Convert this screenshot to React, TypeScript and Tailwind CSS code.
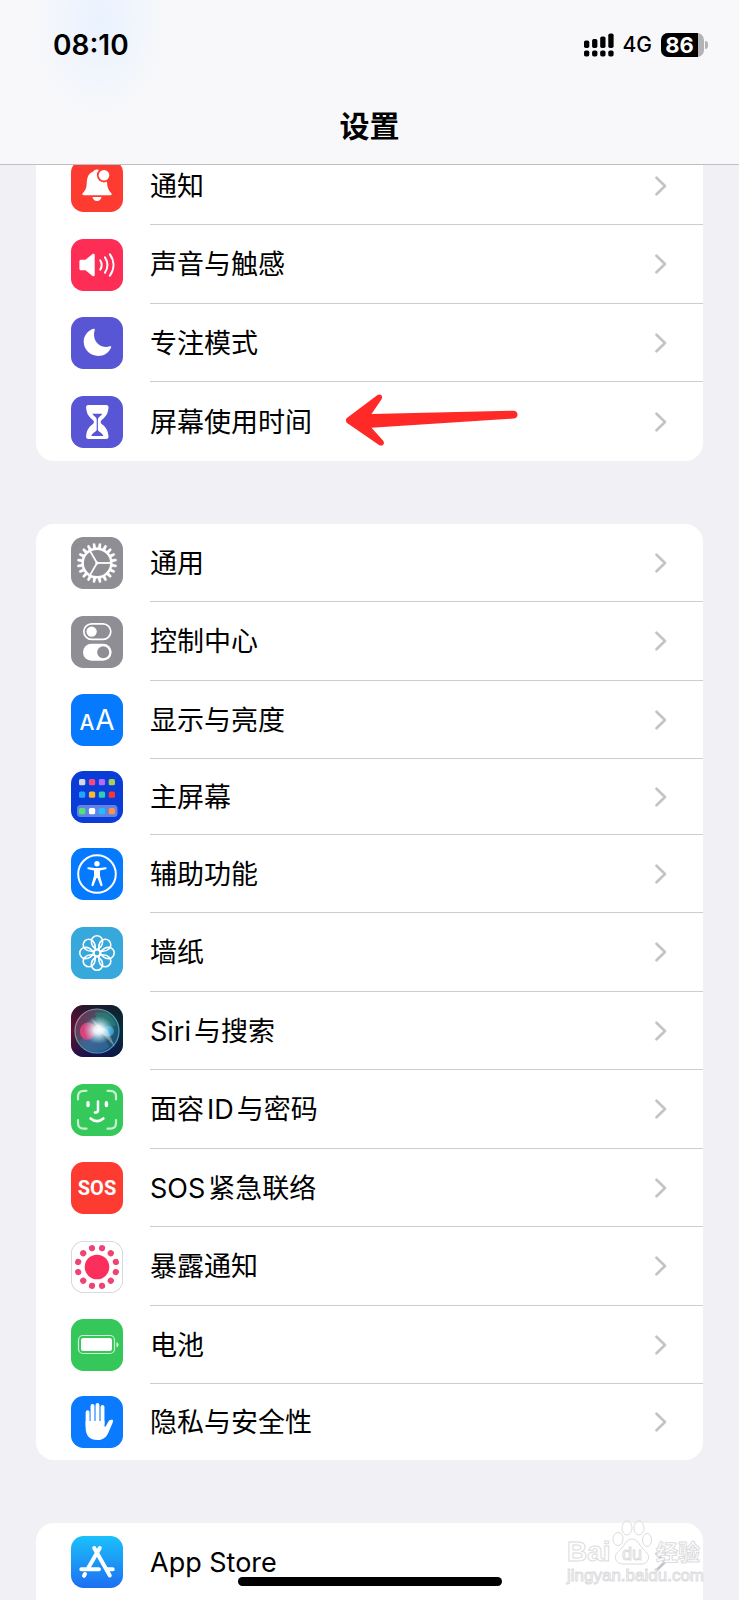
import type { ReactNode } from "react";

const ring = (count: number, offset = 0) =>
  Array.from({ length: count }, (_, i) => offset + (i * 360) / count);

function Tile({ bg, children }: { bg: string; children: ReactNode }) {
  return (
    <svg viewBox="0 0 52 52" aria-hidden="true" className="size-[52px] shrink-0">
      <rect width="52" height="52" rx="12.5" fill={bg} />
      {children}
    </svg>
  );
}

const BellIcon = () => (
  <Tile bg="#fe3b30">
    <path
      d="M12.6 35.2c-1.2 0-1.6-1.2-.8-2.1 2.4-2.7 3.6-4.4 3.9-9.4.3-6 1.5-10.2 6.2-11.9.8-1.5 2.2-2.4 4.1-2.4 1.8 0 3.200.8 4 2.2l3 3 3 7c.1 6.200 1.600 8.700 4.200 11.500.9 1 .4 2.100-.8 2.100z"
      fill="#fff"
    />
    <circle cx="33" cy="15.3" r="7.1" fill="#fe3b30" />
    <circle cx="33" cy="15.3" r="5.3" fill="#fff" />
    <path d="M21.500 37h9c-.5 2.600-2.200 4-4.500 4s-4-1.400-4.500-4z" fill="#fff" />
  </Tile>
);

const SpeakerIcon = () => (
  <Tile bg="#fd2d56">
    <path
      d="M9.900 20.800h4.600l7-5.700c1-.8 2.200-.4 2.200.9v20c0 1.300-1.200 1.700-2.200.9l-7-5.700H9.900c-.9 0-1.500-.6-1.500-1.500v-7.400c0-.9.6-1.500 1.500-1.500z"
      fill="#fff"
    />
    <g fill="none" stroke="#fff" strokeWidth="2" strokeLinecap="round">
      <path d="M29.300 21.400c1.700 2.800 1.700 6.400 0 9.200" />
      <path d="M34 18.400c3 4.700 3 10.500 0 15.200" />
      <path d="M38.900 15.400c4.700 6.600 4.700 14.600 0 21.200" />
    </g>
  </Tile>
);

const MoonIcon = () => (
  <Tile bg="#5856d5">
    <path
      d="M22.500 11.800c.8-.3 1.500.3 1.200 1.200C20.500 23 28.500 32.600 38.900 29.300c1-.3 1.600.3 1.200 1.200C37.900 35.700 33 39 27.300 39 19.100 39 12.700 32.600 12.700 24.600c0-5.800 4-10.900 9.800-12.800z"
      fill="#fff"
    />
  </Tile>
);

const HourglassIcon = () => (
  <Tile bg="#5856d5">
    <path
      d="M17.300 9h18c1.500 0 2.400 1 2.200 2.500-.5 5.800-2 8.600-6.500 12.200-1.800 1.500-1.800 3.200 0 4.600 4.500 3.600 6 6.400 6.500 12.200.2 1.500-.7 2.500-2.200 2.500h-18c-1.500 0-2.400-1-2.200-2.500.5-5.800 2-8.600 6.500-12.200 1.800-1.400 1.800-3.100 0-4.600-4.500-3.600-6-6.400-6.500-12.200C14.900 10 15.800 9 17.300 9z"
      fill="#fff"
    />
    <path
      d="M21.400 17.800h9.800c-.6 1.400-2.300 2.500-3.300 3.500-1 1-1 2-1 4v8.500c.1 1.900 4.300 2.700 5.400 6.200h-12c1.100-3.500 5.300-4.300 5.400-6.200v-8.500c0-2 0-3-1-4-1-1-2.700-2.100-3.300-3.500z"
      fill="#5856d5"
    />
  </Tile>
);

const GearIcon = () => (
  <Tile bg="#8f8e94">
    <g transform="translate(26 26)" fill="none" stroke="#fff">
      <circle r="14.300" strokeWidth="2.400" />
      {ring(20, 9).map((a) => (
        <path key={a} d="M-1.500-15L-1-19.700H1L1.500-15z" fill="#fff" strokeWidth=".3" transform={`rotate(${a})`} />
      ))}
      {ring(3).map((a) => (
        <path key={a} d="M0 0H14" strokeWidth="1.800" transform={`rotate(${a})`} />
      ))}
      <circle r="1.600" fill="#fff" stroke="none" />
    </g>
  </Tile>
);

const SwitchesIcon = () => (
  <Tile bg="#8f8e94">
    <rect x="12.800" y="7.800" width="27" height="15.600" rx="7.800" fill="none" stroke="#fff" strokeWidth="1.700" />
    <circle cx="20.600" cy="15.600" r="5.200" fill="#fff" />
    <rect x="12" y="27.800" width="28.600" height="17" rx="8.500" fill="#fff" />
    <circle cx="32.200" cy="36.300" r="6" fill="#8f8e94" />
  </Tile>
);

const DisplayIcon = () => (
  <Tile bg="#067aff">
    <g fill="#fff" fontFamily="Inter, sans-serif" textAnchor="middle">
      <text x="16" y="36" fontSize="21" fontWeight="500">A</text>
      <text x="34" y="36" fontSize="28">A</text>
    </g>
  </Tile>
);

const appColors = [
  ["#d3d8e6", "#f5487c", "#b36bf8", "#a5d14c"],
  ["#22a6fb", "#fdb72b", "#2dcfae", "#fb3536"],
  ["#52e36f", "#ffffff", "#23bdfb", "#fb9442"],
];
const appRows = [8, 20.5, 37];

const HomeScreenIcon = () => (
  <Tile bg="#0a3cd8">
    <rect x="6" y="34" width="40.500" height="12" rx="3.500" fill="#fff" fillOpacity=".36" />
    {appColors.map((row, r) =>
      row.map((c, i) => (
        <rect key={`${r}-${i}`} x={8 + i * 9.9} y={appRows[r]} width="6.300" height="6.300" rx="1.600" fill={c} />
      )),
    )}
  </Tile>
);

const AccessibilityIcon = () => (
  <Tile bg="#067aff">
    <circle cx="26" cy="26" r="18.800" fill="none" stroke="#fff" strokeWidth="2" />
    <circle cx="26" cy="15.800" r="2.700" fill="#fff" />
    <path
      d="M17.500 19.200l6 .8h5l6-.8c1.400-.1 1.600 1.700.3 2l-5.800 1.300v5.200l2.500 9c.4 1.500-1.500 2-2.100.7L26.500 30h-1l-2.900 7.400c-.6 1.300-2.500.8-2.100-.7l2.500-9v-5.200l-5.800-1.300c-1.300-.3-1.100-2.100.3-2z"
      fill="#fff"
    />
  </Tile>
);

const WallpaperIcon = () => (
  <Tile bg="#36a8dc">
    <g transform="translate(26 26)" fill="none" stroke="#fff" strokeWidth="1.600">
      {ring(8).map((a) => (
        <path
          key={a}
          d="M0-3.200C-3-5-5.600-8-5.600-11.600a5.600 5.600 0 0 1 11.200 0C5.600-8 3-5 0-3.200z"
          transform={`rotate(${a})`}
        />
      ))}
      <circle r="3.200" />
    </g>
  </Tile>
);

const SiriIcon = () => (
  <Tile bg="url(#siri-base)">
    <defs>
      <linearGradient id="siri-base" x1="0" y1="0" x2="1" y2="0">
        <stop offset="0" stopColor="#6a0c34" />
        <stop offset=".45" stopColor="#27203c" />
        <stop offset="1" stopColor="#062c33" />
      </linearGradient>
      <linearGradient id="siri-shade" x1="0" y1="0" x2="0" y2="1">
        <stop offset="0" stopColor="#10151f" stopOpacity=".5" />
        <stop offset=".5" stopColor="#101a40" stopOpacity="0" />
        <stop offset="1" stopColor="#0a0e55" stopOpacity=".7" />
      </linearGradient>
      <linearGradient id="siri-orb" x1="0" y1=".2" x2="1" y2=".8">
        <stop offset="0" stopColor="#8c3a63" />
        <stop offset=".5" stopColor="#4a7f8c" />
        <stop offset="1" stopColor="#16688c" />
      </linearGradient>
      <linearGradient id="siri-rim" x1="0" y1="0" x2="1" y2="1">
        <stop offset="0" stopColor="#e8709c" />
        <stop offset=".4" stopColor="#3fae9a" />
        <stop offset="1" stopColor="#4f8cf0" />
      </linearGradient>
      <radialGradient id="siri-glow">
        <stop offset="0" stopColor="#fff" />
        <stop offset=".3" stopColor="#f2fbff" stopOpacity=".9" />
        <stop offset="1" stopColor="#9fe6ee" stopOpacity="0" />
      </radialGradient>
    </defs>
    <rect width="52" height="52" rx="12.500" fill="url(#siri-shade)" />
    <circle cx="26" cy="26" r="22" fill="url(#siri-orb)" fillOpacity=".65" stroke="url(#siri-rim)" strokeWidth="1.200" />
    <path d="M24 8c9-3 18 3 21 12-5 3-12 4-17 6z" fill="#1c9a7c" fillOpacity=".45" />
    <path d="M8 36c5-4 12-7 19-10 4 5 9 10 11 16-9 8-24 6-30-6z" fill="#3f78c8" fillOpacity=".4" />
    <path d="M28 26c-4-6-9-10-14-8-6 3-7 12-1 16 6 3 10-3 15-8z" fill="#f0417f" fillOpacity=".85" />
    <path d="M26 26c5 3 8 6 13 5 5-1 5-7 2-9-5-3-9 1-15 4z" fill="#37a8ee" fillOpacity=".75" />
    <ellipse cx="27.500" cy="25" rx="15" ry="14" fill="url(#siri-glow)" />
    <path d="M28 25L20 13l10 9 6 2 8 18z" fill="#fff" fillOpacity=".35" />
  </Tile>
);

const FaceIcon = () => (
  <Tile bg="#35c85a">
    <g fill="none" stroke="#fff" strokeLinecap="round">
      <path
        d="M7 15.500V12.500Q7 6.800 12.700 6.800H15.500M36.500 6.800h2.800Q45 6.800 45 12.500v3M45 36v3Q45 44.700 39.300 44.700h-2.800M15.500 44.700h-2.800Q7 44.700 7 39V36"
        strokeWidth="2.200"
        strokeOpacity=".72"
      />
      <path d="M17 18.800v2.700M35.400 18.800v2.700" strokeWidth="3.400" />
      <path d="M27 17.500v8.700q0 2.200-2.200 2.200h-.9" strokeWidth="2.500" />
      <path d="M19.600 34.500q6.400 5.400 12.800 0" strokeWidth="2.600" />
    </g>
  </Tile>
);

const SosIcon = () => (
  <Tile bg="#fe3b30">
    <text
      x="26"
      y="33"
      textAnchor="middle"
      fill="#fff"
      fontSize="20"
      fontWeight="700"
      fontFamily="Roboto, sans-serif"
    >
      SOS
    </text>
  </Tile>
);

const ExposureIcon = () => (
  <Tile bg="#d0d0d2">
    <rect x=".8" y=".8" width="50.400" height="50.400" rx="11.800" fill="#fff" />
    <g transform="translate(26 26)">
      <circle r="12.300" fill="#fc2e5b" />
      {ring(12, 15).map((a) => (
        <circle key={a} cy="-19.500" r="3.100" fill="#ef4374" transform={`rotate(${a})`} />
      ))}
    </g>
  </Tile>
);

const BatteryIcon = () => (
  <Tile bg="#35c759">
    <rect x="7.500" y="16.500" width="36" height="18" rx="4.500" fill="none" stroke="#fff" strokeOpacity=".75" strokeWidth="1.200" />
    <rect x="10" y="19" width="31" height="13" rx="2.200" fill="#fff" />
    <path d="M45.500 23v5.500c1.200-.5 2-1.500 2-2.750s-.8-2.250-2-2.750z" fill="#fff" fillOpacity=".8" />
  </Tile>
);

const HandIcon = () => (
  <Tile bg="#0a7aff">
    <g stroke="#fff" strokeWidth="3.900" strokeLinecap="round">
      <path d="M16.600 16.300V30M21.500 10V28M26.500 9V28M31.500 11V28" />
    </g>
    <path
      d="M14.650 25h18.800v4.800c0 1 1 1.200 1.500.3l2.300-4.300c.8-1.600 2.200-2.500 3.900-2 1 .3 1.200 1.200.8 2.100l-4.500 10.500c-2.200 5.200-5.900 7.600-11.100 7.600-7.400 0-11.700-4.300-11.700-12z"
      fill="#fff"
    />
  </Tile>
);

const AppStoreIcon = () => (
  <Tile bg="url(#store)">
    <defs>
      <linearGradient id="store" x1="0" y1="0" x2="0" y2="1">
        <stop offset="0" stopColor="#1bc1fb" />
        <stop offset="1" stopColor="#1d6ff2" />
      </linearGradient>
    </defs>
    <g fill="none" stroke="#fff" strokeWidth="4" strokeLinecap="round">
      <path d="M28.800 12L17.500 31.500M14 38l-1 1.800M23.200 12L38.800 39.500M10.300 33.300H28M36.500 33.300h5.200" />
    </g>
    <path d="M28.500 28.500l6 10.500" stroke="#1e86f5" strokeWidth="1.200" />
  </Tile>
);

type Item = { label: string; icon: ReactNode; compact?: boolean; marked?: boolean };

const groups: Item[][] = [
  [
    { label: "通知", icon: <BellIcon /> },
    { label: "声音与触感", icon: <SpeakerIcon /> },
    { label: "专注模式", icon: <MoonIcon /> },
    { label: "屏幕使用时间", icon: <HourglassIcon />, marked: true },
  ],
  [
    { label: "通用", icon: <GearIcon /> },
    { label: "控制中心", icon: <SwitchesIcon /> },
    { label: "显示与亮度", icon: <DisplayIcon /> },
    { label: "主屏幕", icon: <HomeScreenIcon />, compact: true },
    { label: "辅助功能", icon: <AccessibilityIcon /> },
    { label: "墙纸", icon: <WallpaperIcon /> },
    { label: "Siri与搜索", icon: <SiriIcon /> },
    { label: "面容ID与密码", icon: <FaceIcon /> },
    { label: "SOS紧急联络", icon: <SosIcon /> },
    { label: "暴露通知", icon: <ExposureIcon /> },
    { label: "电池", icon: <BatteryIcon /> },
    { label: "隐私与安全性", icon: <HandIcon />, compact: true },
  ],
  [{ label: "App Store", icon: <AppStoreIcon /> }],
];

/** Sets Latin runs a little apart from the Chinese characters beside them. */
function Label({ text }: { text: string }) {
  return (
    <span className="pt-[2px] text-[27px] leading-9">
      {text.split(/([A-Za-z ]+)/).filter(Boolean).map((part, i) =>
        /[A-Za-z]/.test(part) ? (
          <span key={i} className="mx-[3px] first:ml-0 last:mr-0">{part}</span>
        ) : (
          <span key={i}>{part}</span>
        ),
      )}
    </span>
  );
}

function Arrow() {
  return (
    <svg viewBox="0 0 174 54" aria-hidden="true" className="absolute left-[309px] top-[11px] h-[54px] w-[174px]">
      <path
        d="M2.500 24.600L32.200 2.200c3.200-2.200 6.400 1 4.200 4.200L26.500 21 168.500 17.700c5.400 0 5.400 7.600 0 7.900L26.500 34.700 38 47.500c2.600 3.300-.6 6.200-4 4.400L2.800 30.600c-2.400-1.700-2.400-4.400-.3-6z"
        fill="#ff2a27"
      />
    </svg>
  );
}

function Row({ item }: { item: Item }) {
  return (
    <li className={`group relative ${item.compact ? "h-[76px]" : "h-[78px] even:h-[79px]"}`}>
      <a href="#" className="flex h-full items-center gap-[27px] pl-[35px]">
        {item.icon}
        <span className="flex h-full flex-1 items-center justify-between border-b border-[#cdcdd0] pr-9 group-last:border-b-0">
          <Label text={item.label} />
          <svg viewBox="0 0 14 22" aria-hidden="true" className="h-[22px] w-[14px]">
            <path d="M3.500 2.800L12 11l-8.500 8.200" fill="none" stroke="#c4c4c7" strokeWidth="2.700" strokeLinecap="round" strokeLinejoin="round" />
          </svg>
        </span>
      </a>
      {item.marked && <Arrow />}
    </li>
  );
}

function StatusBar() {
  return (
    <div className="flex h-[90px] items-center justify-between pl-[53px] pr-[31px]">
      <time className="text-[28px] font-semibold leading-9">08:10</time>
      <div className="flex items-center gap-[9px]">
        <svg viewBox="0 0 30 24" role="img" aria-label="信号" className="h-6 w-[30px]">
          {[0, 1, 2, 3].map((i) => (
            <g key={i}>
              <rect x={i * 8.1} y={[7.5, 6, 3.5, 0.5][i]} width="5.300" height={[7.5, 9, 11.5, 14.5][i]} rx="1.800" />
              <rect x={i * 8.1} y="17.500" width="5.300" height="6" rx="1.800" />
            </g>
          ))}
        </svg>
        <span className="text-[21px] font-medium leading-7">4G</span>
        <div className="flex items-center gap-px">
          <div className="flex h-6 w-[43px] items-center overflow-hidden rounded-[7px] bg-[#b3b3b5]">
            <span className="flex h-full w-[37px] items-center justify-center bg-black text-[22px] font-bold leading-6 text-white">
              86
            </span>
          </div>
          <span className="h-2 w-[3px] rounded-r-full bg-[#b3b3b5]" />
        </div>
      </div>
    </div>
  );
}

function Watermark() {
  return (
    <div
      aria-hidden="true"
      className="pointer-events-none absolute bottom-[14px] right-9 flex w-[136px] flex-col font-['Liberation_Sans','Noto_Sans_CJK_SC',sans-serif] text-white [-webkit-text-stroke:1px_#dcdcde]"
    >
      <div className="flex items-end">
        <span className="w-[45px] text-[28px] font-bold leading-7">Bai</span>
        <span className="relative flex h-[46px] w-10 items-end justify-center">
          <svg viewBox="0 0 40 46" className="absolute inset-0 size-full">
            <g fill="#fff" fillOpacity=".6" stroke="#dcdcde">
              <ellipse cx="6" cy="19" rx="5" ry="6.500" />
              <ellipse cx="15" cy="8" rx="5" ry="7" />
              <ellipse cx="27" cy="8" rx="5" ry="7" />
              <ellipse cx="35" cy="20" rx="4.500" ry="6.500" />
              <path d="M20 19c6 0 7 6 11 10s7 6 5 11-8 4-16 4-14 1-16-4 1-7 5-11 5-10 11-10z" />
            </g>
          </svg>
          <span className="relative text-[18px] leading-6">du</span>
        </span>
        <span className="pl-1 text-[22px] font-bold leading-[26px]">经验</span>
      </div>
      <span className="text-[17px] leading-5">jingyan.baidu.com</span>
    </div>
  );
}

export default function App() {
  return (
    <div className="relative flex h-screen flex-col overflow-hidden bg-[#f0f0f5] font-[Inter,'Noto_Sans_CJK_SC',sans-serif] text-black">
      <header className="z-10 flex h-[165px] shrink-0 flex-col border-b border-[#bfbfc2] bg-[#f8f8fa] bg-[radial-gradient(ellipse_70px_100px_at_100px_20px,#e9f2ff,transparent)]">
        <StatusBar />
        <h1 className="pt-4 text-center text-[30px] font-bold leading-10">设置</h1>
      </header>
      <main className="-mt-[18px] flex shrink-0 flex-col gap-[63px] px-9">
        {groups.map((items, i) => (
          <ul key={i} className="rounded-[18px] bg-white last:rounded-b-none">
            {items.map((item) => (
              <Row key={item.label} item={item} />
            ))}
          </ul>
        ))}
      </main>
      <Watermark />
      <div className="absolute bottom-[14px] left-1/2 h-[9px] w-[264px] -translate-x-1/2 rounded-full bg-black" />
    </div>
  );
}
